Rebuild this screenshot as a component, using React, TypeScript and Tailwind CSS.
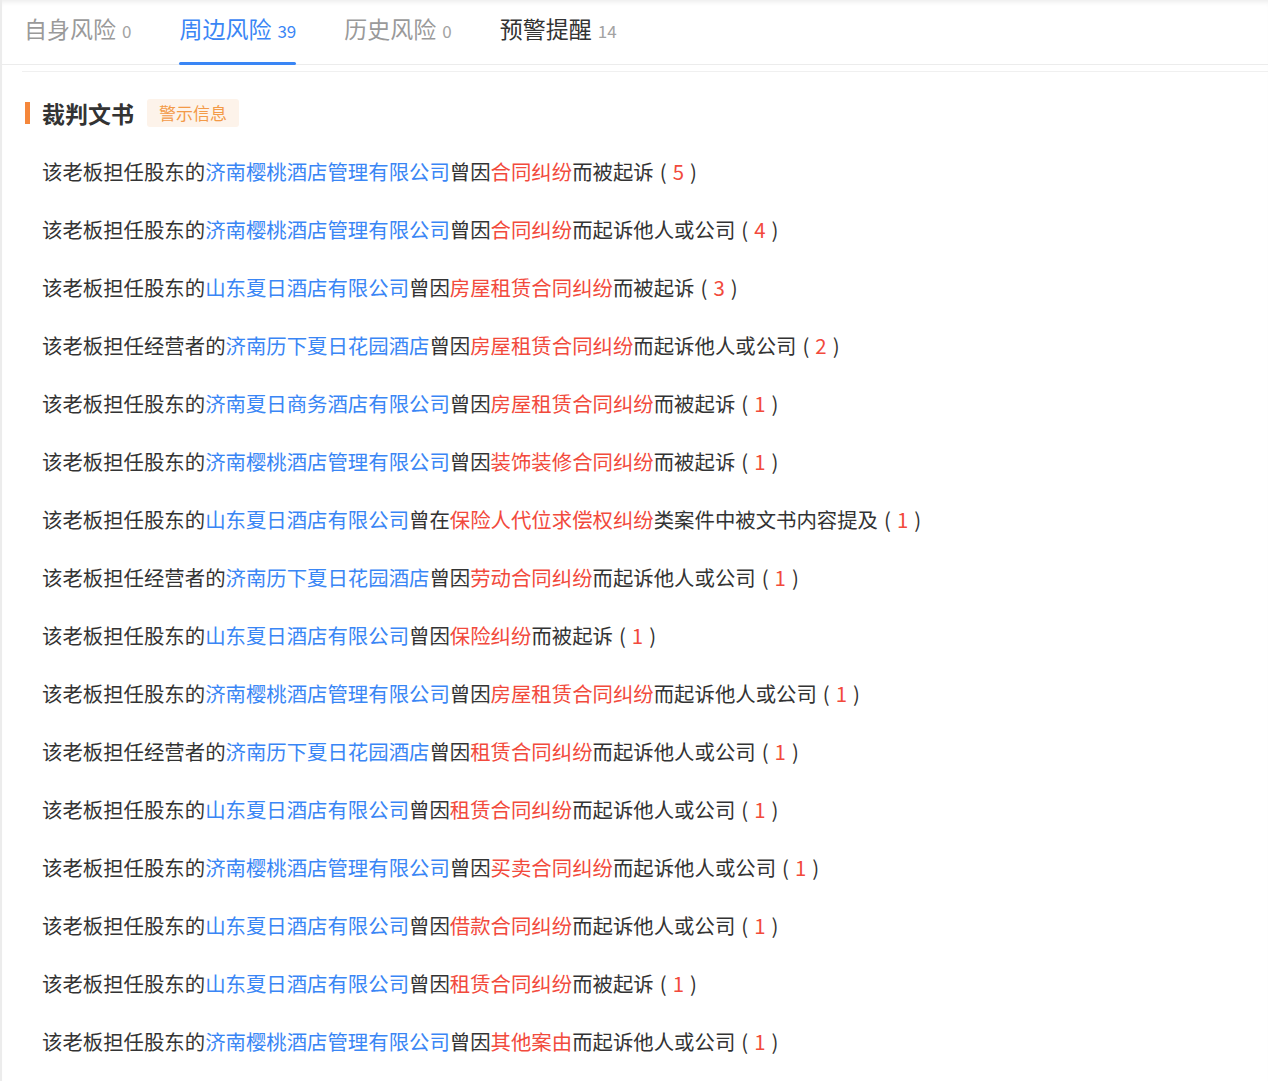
import React from 'react';

type Row = {
  role: string;
  company: string;
  verb: string;
  cause: string;
  tail: string;
  count: number;
};

const rows: Row[] = [
  { role: '股东', company: '济南樱桃酒店管理有限公司', verb: '曾因', cause: '合同纠纷', tail: '而被起诉', count: 5 },
  { role: '股东', company: '济南樱桃酒店管理有限公司', verb: '曾因', cause: '合同纠纷', tail: '而起诉他人或公司', count: 4 },
  { role: '股东', company: '山东夏日酒店有限公司', verb: '曾因', cause: '房屋租赁合同纠纷', tail: '而被起诉', count: 3 },
  { role: '经营者', company: '济南历下夏日花园酒店', verb: '曾因', cause: '房屋租赁合同纠纷', tail: '而起诉他人或公司', count: 2 },
  { role: '股东', company: '济南夏日商务酒店有限公司', verb: '曾因', cause: '房屋租赁合同纠纷', tail: '而被起诉', count: 1 },
  { role: '股东', company: '济南樱桃酒店管理有限公司', verb: '曾因', cause: '装饰装修合同纠纷', tail: '而被起诉', count: 1 },
  { role: '股东', company: '山东夏日酒店有限公司', verb: '曾在', cause: '保险人代位求偿权纠纷', tail: '类案件中被文书内容提及', count: 1 },
  { role: '经营者', company: '济南历下夏日花园酒店', verb: '曾因', cause: '劳动合同纠纷', tail: '而起诉他人或公司', count: 1 },
  { role: '股东', company: '山东夏日酒店有限公司', verb: '曾因', cause: '保险纠纷', tail: '而被起诉', count: 1 },
  { role: '股东', company: '济南樱桃酒店管理有限公司', verb: '曾因', cause: '房屋租赁合同纠纷', tail: '而起诉他人或公司', count: 1 },
  { role: '经营者', company: '济南历下夏日花园酒店', verb: '曾因', cause: '租赁合同纠纷', tail: '而起诉他人或公司', count: 1 },
  { role: '股东', company: '山东夏日酒店有限公司', verb: '曾因', cause: '租赁合同纠纷', tail: '而起诉他人或公司', count: 1 },
  { role: '股东', company: '济南樱桃酒店管理有限公司', verb: '曾因', cause: '买卖合同纠纷', tail: '而起诉他人或公司', count: 1 },
  { role: '股东', company: '山东夏日酒店有限公司', verb: '曾因', cause: '借款合同纠纷', tail: '而起诉他人或公司', count: 1 },
  { role: '股东', company: '山东夏日酒店有限公司', verb: '曾因', cause: '租赁合同纠纷', tail: '而被起诉', count: 1 },
  { role: '股东', company: '济南樱桃酒店管理有限公司', verb: '曾因', cause: '其他案由', tail: '而起诉他人或公司', count: 1 },
];

const tabs = [
  { label: '自身风险', count: 0, state: 'muted' },
  { label: '周边风险', count: 39, state: 'active' },
  { label: '历史风险', count: 0, state: 'muted' },
  { label: '预警提醒', count: 14, state: 'dark' },
];

const App: React.FC = () => {
  return (
    <div
      className="min-h-screen bg-white border-l-2 border-[#ececec] text-[#333] shadow-[inset_0_5px_5px_-3px_rgba(0,0,0,0.08)]"
      style={{ fontFamily: '"Noto Sans CJK SC", "Noto Sans", sans-serif' }}
    >
      {/* Tabs */}
      <div className="flex h-[65px] items-stretch gap-[48px] pl-[22px] border-b border-[#ececec]">
        {tabs.map((tab) => (
          <div key={tab.label} className="relative flex items-center pb-[8px]">
            <span
              className={
                'text-[23px] leading-none ' +
                (tab.state === 'active'
                  ? 'text-[#3a86f5]'
                  : tab.state === 'dark'
                  ? 'text-[#333]'
                  : 'text-[#9a9a9a]')
              }
            >
              {tab.label}
            </span>
            <span
              className={
                'ml-[6px] mt-[4px] text-[17px] leading-none ' +
                (tab.state === 'active' ? 'text-[#3a86f5]' : 'text-[#a3a3a3]')
              }
            >
              {tab.count}
            </span>
            {tab.state === 'active' && (
              <div className="absolute left-0 right-0 bottom-[-1px] h-[3px] rounded-full bg-[#3a86f5]" />
            )}
          </div>
        ))}
      </div>
      <div className="mt-[6px] ml-[20px] border-t border-[#f0f0f0]" />

      {/* Section header */}
      <div className="mt-[27px] flex items-center pl-[23px]">
        <div className="h-[22px] w-[5px] bg-[#f5873b]" />
        <h2 className="ml-[12px] text-[23px] font-bold leading-none text-[#333]">裁判文书</h2>
        <span className="ml-[13px] flex h-[28px] items-center rounded-[3px] bg-[#fdf3ea] px-[12px] text-[17px] text-[#f39a47]">
          警示信息
        </span>
      </div>

      {/* Rows */}
      <div className="mt-[15px] pl-[40px]">
        {rows.map((r, i) => (
          <div key={i} className="flex h-[58px] items-center whitespace-nowrap text-[20.4px] leading-none">
            <span>该老板担任{r.role}的</span>
            <span className="text-[#3a86f5]">{r.company}</span>
            <span>{r.verb}</span>
            <span className="text-[#f24a3c]">{r.cause}</span>
            <span>{r.tail}</span>
            <span className="ml-[6px]">(</span>
            <span className="mx-[6px] text-[#f24a3c]">{r.count}</span>
            <span>)</span>
          </div>
        ))}
      </div>
    </div>
  );
};

export default App;
